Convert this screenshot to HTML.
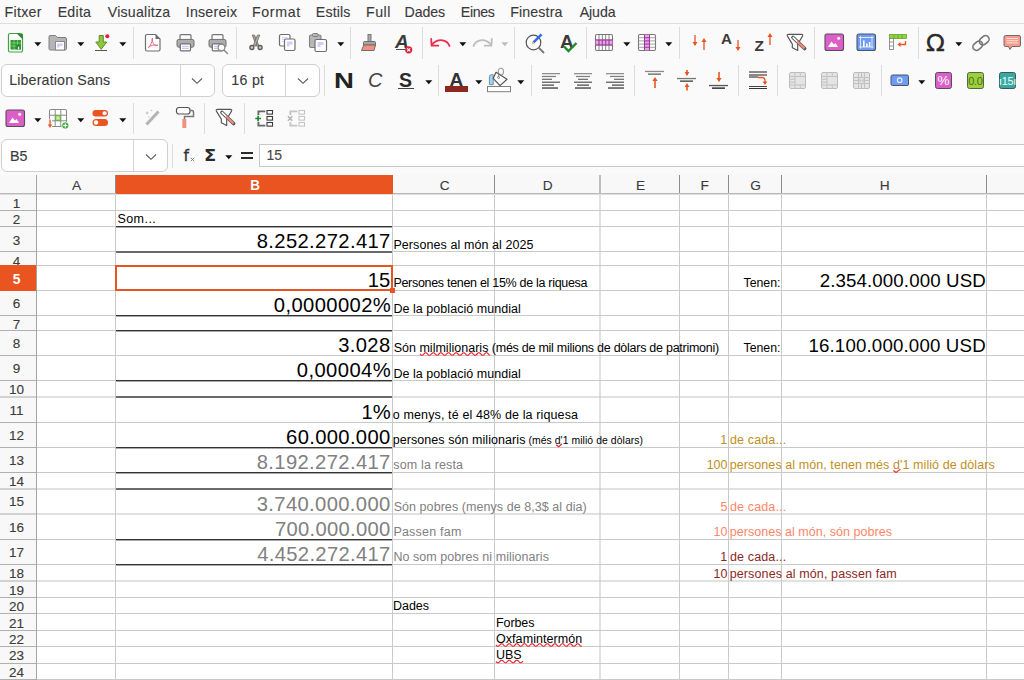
<!DOCTYPE html>
<html lang="ca"><head><meta charset="utf-8"><title>Full de càlcul</title>
<style>
html,body{margin:0;padding:0;}
body{width:1024px;height:680px;overflow:hidden;position:relative;background:#fafafa;font-family:"Liberation Sans",sans-serif;}
.t{position:absolute;white-space:nowrap;}
.u{position:absolute;white-space:nowrap;color:#3a3a3a;-webkit-text-stroke:0.12px #3a3a3a;}
#sheet{position:absolute;left:0;top:175px;width:1024px;height:505px;overflow:hidden;}
</style></head><body>
<div style="position:absolute;left:0px;top:23px;width:1024px;height:1px;background:#dedede;"></div>
<div class="u" style="top:2px;font-size:14.2px;line-height:20px;color:#3a3a3a;letter-spacing:0.304px;left:4.464px;">Fitxer</div>
<div class="u" style="top:2px;font-size:14.2px;line-height:20px;color:#3a3a3a;letter-spacing:0.240px;left:57.664px;">Edita</div>
<div class="u" style="top:2px;font-size:14.2px;line-height:20px;color:#3a3a3a;letter-spacing:0.231px;left:107.729px;">Visualitza</div>
<div class="u" style="top:2px;font-size:14.2px;line-height:20px;color:#3a3a3a;letter-spacing:0.231px;left:185.722px;">Insereix</div>
<div class="u" style="top:2px;font-size:14.2px;line-height:20px;color:#3a3a3a;letter-spacing:0.673px;left:251.964px;">Format</div>
<div class="u" style="top:2px;font-size:14.2px;line-height:20px;color:#3a3a3a;letter-spacing:0.139px;left:315.864px;">Estils</div>
<div class="u" style="top:2px;font-size:14.2px;line-height:20px;color:#3a3a3a;letter-spacing:0.499px;left:366.064px;">Full</div>
<div class="u" style="top:2px;font-size:14.2px;line-height:20px;color:#3a3a3a;letter-spacing:-0.101px;left:404.564px;">Dades</div>
<div class="u" style="top:2px;font-size:14.2px;line-height:20px;color:#3a3a3a;letter-spacing:-0.367px;left:460.864px;">Eines</div>
<div class="u" style="top:2px;font-size:14.2px;line-height:20px;color:#3a3a3a;letter-spacing:0.153px;left:510.164px;">Finestra</div>
<div class="u" style="top:2px;font-size:14.2px;line-height:20px;color:#3a3a3a;letter-spacing:-0.095px;left:579.7px;">Ajuda</div>
<svg style="position:absolute;left:7px;top:32px" width="18" height="22" viewBox="0 0 18 22"><path d="M3 1.5H12L15.5 5V18.5a1.5 1.5 0 0 1-1.5 1.5H3A1.5 1.5 0 0 1 1.5 18.5V3A1.5 1.5 0 0 1 3 1.5Z" fill="#fff" stroke="#43a047" stroke-width="1.2"/>
<path d="M9.5 1.2L16 7.7V3a1.8 1.8 0 0 0-1.8-1.8Z" fill="#2e8b2e"/>
<rect x="3.5" y="8" width="10.5" height="9.5" fill="#2f9a2f"/>
<path d="M3.5 11H14M3.5 14H14M7 8V17.5M10.5 8V17.5" stroke="#7fd07f" stroke-width="0.8"/>
<rect x="9.5" y="13" width="4" height="4.5" fill="#1f7a1f"/><rect x="10.8" y="14.5" width="1.5" height="3" fill="#e8ffe8"/></svg>
<svg style="position:absolute;left:34px;top:42px" width="8" height="5" viewBox="0 0 8 5"><path d="M0.3 0.3H7.3L3.8 4.3Z" fill="#111"/></svg>
<svg style="position:absolute;left:48px;top:34px" width="20" height="18" viewBox="0 0 20 18"><path d="M2 1.5H7.5L9.5 3.5H17A1.5 1.5 0 0 1 18.5 5V14.5A1.5 1.5 0 0 1 17 16H2.5A1.5 1.5 0 0 1 1 14.5V2.5A1 1 0 0 1 2 1.5Z" fill="#b5b5b5" stroke="#808080" stroke-width="1"/>
<rect x="7.5" y="7.5" width="9" height="8.5" fill="#fff" stroke="#8a8a8a" stroke-width="1"/>
<path d="M9 9.5H14.5V12H11.5V13.5H9Z" fill="#d0d0ff"/></svg>
<svg style="position:absolute;left:77px;top:42px" width="8" height="5" viewBox="0 0 8 5"><path d="M0.3 0.3H7.3L3.8 4.3Z" fill="#111"/></svg>
<svg style="position:absolute;left:93px;top:33px" width="18" height="20" viewBox="0 0 18 20"><path d="M6.2 2.5H10.3V9H13.7L8.2 16.3L2.8 9H6.2Z" fill="#8fc63f" stroke="#5e8f22" stroke-width="1" stroke-linejoin="round"/>
<rect x="2" y="17" width="12" height="1" fill="#555"/>
<circle cx="14.3" cy="3.2" r="2" fill="#e01b3c"/></svg>
<svg style="position:absolute;left:119px;top:42px" width="8" height="5" viewBox="0 0 8 5"><path d="M0.3 0.3H7.3L3.8 4.3Z" fill="#111"/></svg>
<div style="position:absolute;left:133px;top:27px;width:1px;height:32px;background:#dcdcdc;"></div>
<svg style="position:absolute;left:144px;top:33px" width="18" height="20" viewBox="0 0 18 20"><path d="M3 1.5H11.5L16 6V16.5A1.5 1.5 0 0 1 14.5 18H3A1.5 1.5 0 0 1 1.5 16.5V3A1.5 1.5 0 0 1 3 1.5Z" fill="#fff" stroke="#6e6e6e" stroke-width="1.2"/>
<path d="M11.5 1.5V6H16Z" fill="#6e6e6e"/>
<path d="M8.3 5.5C8.3 8 8.8 10 10 11.5C11.2 12.5 12.5 12.8 13.5 12.3M8.3 5.5C8.5 9 6.5 12.5 4.5 14.5M4.5 14.5C6.5 12.3 10 11.3 13.5 12.3" fill="none" stroke="#e5637a" stroke-width="0.95" stroke-linecap="round"/></svg>
<svg style="position:absolute;left:175.5px;top:33px" width="20" height="20" viewBox="0 0 20 20"><rect x="4" y="1.6" width="11" height="6" rx="1" fill="#fff" stroke="#767676" stroke-width="1.2"/>
<rect x="1" y="6.4" width="17" height="7.8" rx="1.8" fill="#adadad" stroke="#6e6e6e" stroke-width="1"/>
<rect x="4.3" y="10.8" width="10.2" height="7" rx="1" fill="#fff" stroke="#6e6e6e" stroke-width="1.2"/>
<path d="M6 13.3H12.8M6 15.3H12.8" stroke="#c8c8ff" stroke-width="1.2"/></svg>
<svg style="position:absolute;left:207.5px;top:33px" width="20" height="20" viewBox="0 0 20 20"><rect x="4" y="1.6" width="11" height="6" rx="1" fill="#fff" stroke="#767676" stroke-width="1.2"/>
<rect x="1" y="6.4" width="17" height="7.8" rx="1.8" fill="#adadad" stroke="#6e6e6e" stroke-width="1"/>
<rect x="4.3" y="10.8" width="10.2" height="7" rx="1" fill="#fff" stroke="#6e6e6e" stroke-width="1.2"/>
<path d="M6 13.3H12.8M6 15.3H12.8" stroke="#c8c8ff" stroke-width="1.2"/></svg>
<svg style="position:absolute;left:216px;top:42px" width="14" height="14" viewBox="0 0 14 14"><circle cx="5.5" cy="5.5" r="3.3" fill="#fff" stroke="#8a8a8a" stroke-width="1.2"/><path d="M8 8L11.5 11.5" stroke="#8a8a8a" stroke-width="1.5" stroke-linecap="round"/></svg>
<div style="position:absolute;left:236px;top:27px;width:1px;height:32px;background:#dcdcdc;"></div>
<svg style="position:absolute;left:247px;top:33px" width="18" height="20" viewBox="0 0 18 20"><path d="M5.2 2L7.6 2.2L11.6 12.2L9.6 13.2Z" fill="#a9a59b" stroke="#5c5a55" stroke-width="0.7" stroke-linejoin="round"/>
<path d="M12.8 2L10.4 2.2L6.4 12.2L8.4 13.2Z" fill="#b4b0a6" stroke="#5c5a55" stroke-width="0.7" stroke-linejoin="round"/>
<circle cx="4.9" cy="14.5" r="2" fill="#d0ccc2" stroke="#5c5a55" stroke-width="1.3"/><circle cx="13.1" cy="14.5" r="2" fill="#d0ccc2" stroke="#5c5a55" stroke-width="1.3"/></svg>
<svg style="position:absolute;left:278px;top:33px" width="20" height="20" viewBox="0 0 20 20"><rect x="1.5" y="1.5" width="10.5" height="11.5" rx="1.5" fill="#fff" stroke="#6e6e6e" stroke-width="1.2"/>
<path d="M4 4.5H9.5M4 6.5H9.5M4 8.5H7" stroke="#d4d4ff" stroke-width="1.2"/>
<rect x="6.5" y="6" width="10.5" height="11.5" rx="1.5" fill="#fff" stroke="#6e6e6e" stroke-width="1.2"/>
<path d="M9 8.5H14.5V11.5H11.5V13.5H9Z" fill="#d0d0ff"/></svg>
<svg style="position:absolute;left:308px;top:32px" width="22" height="22" viewBox="0 0 22 22"><rect x="1.5" y="3" width="11.5" height="12.5" rx="1.5" fill="#b8b8b8" stroke="#808080" stroke-width="1.1"/>
<rect x="4.5" y="1.5" width="5.5" height="3" rx="1" fill="#b8b8b8" stroke="#808080" stroke-width="1"/>
<rect x="7" y="7.5" width="11.5" height="12" rx="1.5" fill="#fff" stroke="#6e6e6e" stroke-width="1.2"/>
<path d="M9.5 10H15.5V13H12.5V15H9.5Z" fill="#d0d0ff"/></svg>
<svg style="position:absolute;left:337px;top:42px" width="8" height="5" viewBox="0 0 8 5"><path d="M0.3 0.3H7.3L3.8 4.3Z" fill="#111"/></svg>
<div style="position:absolute;left:350px;top:27px;width:1px;height:32px;background:#dcdcdc;"></div>
<svg style="position:absolute;left:360px;top:33px" width="18" height="20" viewBox="0 0 18 20"><rect x="8" y="1.5" width="3" height="7" fill="#aaa" stroke="#777" stroke-width="1"/>
<path d="M4.5 8.5H14.5Q15.5 8.5 15.5 9.5V12H3.5V9.5Q3.5 8.5 4.5 8.5Z" fill="#a6a6a6" stroke="#6e6e6e" stroke-width="1"/>
<path d="M3.8 12H15.5L14 17.5H1.5Z" fill="#f4907f" stroke="#6e6e6e" stroke-width="1"/></svg>
<div class="t" style="top:29px;font-size:19px;line-height:25px;color:#3a3a3a;font-weight:bold;left:395px;font-style:italic;">A</div>
<div style="position:absolute;left:396px;top:49px;width:12px;height:1px;background:#555;"></div>
<svg style="position:absolute;left:404px;top:45px" width="10" height="10" viewBox="0 0 10 10"><circle cx="4.7" cy="4.8" r="3.6" fill="#d9263c"/><path d="M3.2 3.3L6.2 6.3M6.2 3.3L3.2 6.3" stroke="#fff" stroke-width="1.1"/></svg>
<div style="position:absolute;left:422px;top:27px;width:1px;height:32px;background:#dcdcdc;"></div>
<svg style="position:absolute;left:428px;top:35px" width="24" height="14" viewBox="0 0 24 14"><path d="M21.5 11C19.5 5 11 2.5 4.5 9" fill="none" stroke="#ed2b4d" stroke-width="1.8" stroke-linecap="round"/><path d="M3.2 3.8L3.6 10.6L10.3 10.7" fill="none" stroke="#ed2b4d" stroke-width="1.8" stroke-linecap="round" stroke-linejoin="round"/></svg>
<svg style="position:absolute;left:459px;top:42px" width="8" height="5" viewBox="0 0 8 5"><path d="M0.3 0.3H7.3L3.8 4.3Z" fill="#111"/></svg>
<svg style="position:absolute;left:471px;top:35px" width="24" height="14" viewBox="0 0 24 14"><path d="M2.5 11C4.5 5 13 2.5 19.5 9" fill="none" stroke="#bdbdbd" stroke-width="1.8" stroke-linecap="round"/><path d="M20.8 3.8L20.4 10.6L13.7 10.7" fill="none" stroke="#bdbdbd" stroke-width="1.8" stroke-linecap="round" stroke-linejoin="round"/></svg>
<svg style="position:absolute;left:501px;top:42px" width="8" height="5" viewBox="0 0 8 5"><path d="M0.3 0.3H7.3L3.8 4.3Z" fill="#bdbdbd"/></svg>
<div style="position:absolute;left:514px;top:27px;width:1px;height:32px;background:#dcdcdc;"></div>
<svg style="position:absolute;left:524px;top:32px" width="24" height="22" viewBox="0 0 24 22"><circle cx="9.5" cy="10.5" r="7.3" fill="#fff" stroke="#555" stroke-width="1.2"/>
<path d="M15 16L19.5 20.5" stroke="#777" stroke-width="1.8" stroke-linecap="round"/>
<path d="M9.5 10.3L17.5 2.3" stroke="#2f6fed" stroke-width="2.6"/><path d="M7.6 12.4L8.5 9.3L10.6 11.4Z" fill="#f0b070"/></svg>
<div class="t" style="top:28.5px;font-size:19px;line-height:25px;color:#3a3a3a;font-weight:bold;left:560px;">A</div>
<svg style="position:absolute;left:562px;top:40px" width="18" height="14" viewBox="0 0 18 14"><path d="M2 6.5L6.5 11L14.5 3" fill="none" stroke="#1e8a2e" stroke-width="2.4"/></svg>
<div style="position:absolute;left:586px;top:27px;width:1px;height:32px;background:#dcdcdc;"></div>
<svg style="position:absolute;left:594px;top:33px" width="20" height="20" viewBox="0 0 20 20"><rect x="1.5" y="1.5" width="17" height="16" rx="1.5" fill="#fff" stroke="#777" stroke-width="1.1"/>
<path d="M5 1.5V17.5M8.3 1.5V17.5M11.7 1.5V17.5M15 1.5V17.5M1.5 7H18.5M1.5 12H18.5" stroke="#777" stroke-width="0.9"/>
<rect x="1.5" y="7" width="17" height="5" fill="#d68ad6" opacity=".75"/><path d="M1.5 7H18.5M1.5 12H18.5" stroke="#a033a0" stroke-width="1"/>
<path d="M5 7V12M8.3 7V12M11.7 7V12M15 7V12" stroke="#a033a0" stroke-width="0.9"/></svg>
<svg style="position:absolute;left:623px;top:42px" width="8" height="5" viewBox="0 0 8 5"><path d="M0.3 0.3H7.3L3.8 4.3Z" fill="#111"/></svg>
<svg style="position:absolute;left:637px;top:33px" width="20" height="20" viewBox="0 0 20 20"><rect x="1.5" y="1.5" width="17" height="16" rx="1.5" fill="#fff" stroke="#777" stroke-width="1.1"/>
<path d="M1.5 4.7H18.5M1.5 7.9H18.5M1.5 11.1H18.5M1.5 14.3H18.5M7.5 1.5V17.5M12.5 1.5V17.5" stroke="#999" stroke-width="0.9"/>
<rect x="7.5" y="1.5" width="5" height="16" fill="#d68ad6" opacity=".75"/><path d="M7.5 1.5V17.5M12.5 1.5V17.5" stroke="#a033a0" stroke-width="1"/>
<path d="M7.5 4.7H12.5M7.5 7.9H12.5M7.5 11.1H12.5M7.5 14.3H12.5" stroke="#a033a0" stroke-width="0.9"/></svg>
<svg style="position:absolute;left:665px;top:42px" width="8" height="5" viewBox="0 0 8 5"><path d="M0.3 0.3H7.3L3.8 4.3Z" fill="#111"/></svg>
<div style="position:absolute;left:679px;top:27px;width:1px;height:32px;background:#dcdcdc;"></div>
<svg style="position:absolute;left:690.5px;top:34px" width="8" height="13" viewBox="0 0 8 13"><path d="M4 1V11" stroke="#e95420" stroke-width="1.3"/><path d="M1.5 8H6.5L4 12Z" fill="#e95420"/></svg>
<svg style="position:absolute;left:699.5px;top:38px" width="8" height="13" viewBox="0 0 8 13"><path d="M4 2V12" stroke="#e95420" stroke-width="1.3"/><path d="M1.5 4H6.5L4 0Z" fill="#e95420"/></svg>
<div class="t" style="top:28.3px;font-size:15.2px;line-height:21px;color:#3a3a3a;font-weight:bold;left:721px;">A</div>
<svg style="position:absolute;left:733.5px;top:39px" width="8" height="13" viewBox="0 0 8 13"><path d="M4 1V11" stroke="#e95420" stroke-width="1.3"/><path d="M1.5 8H6.5L4 12Z" fill="#e95420"/></svg>
<div class="t" style="top:35.2px;font-size:15.5px;line-height:21px;color:#3a3a3a;font-weight:bold;left:754.5px;">Z</div>
<svg style="position:absolute;left:765.5px;top:33px" width="8" height="13" viewBox="0 0 8 13"><path d="M4 2V12" stroke="#e95420" stroke-width="1.3"/><path d="M1.5 4H6.5L4 0Z" fill="#e95420"/></svg>
<svg style="position:absolute;left:786px;top:33px" width="22" height="20" viewBox="0 0 22 20"><path d="M2.6 1.4H15.4Q17.4 1.4 16.5 3.1L11.7 11.3V17.4L6.35 14.8V11.1L1.4 3.1Q0.6 1.4 2.6 1.4Z" fill="#fff" stroke="#555" stroke-width="1.15" stroke-linejoin="round"/>
<path d="M7 4.5L18.6 15.5" stroke="#5a5a5a" stroke-width="3.7" stroke-linecap="round"/><path d="M7.2 4.7L11.2 8.5" stroke="#fff" stroke-width="1.6" stroke-linecap="round"/><path d="M11.2 8.5L18.5 15.4" stroke="#f08a7a" stroke-width="2.2" stroke-linecap="butt"/></svg>
<div style="position:absolute;left:814px;top:27px;width:1px;height:32px;background:#dcdcdc;"></div>
<svg style="position:absolute;left:824px;top:33px" width="21" height="20" viewBox="0 0 21 20"><rect x="1" y="1" width="18.5" height="16.5" rx="2" fill="#dc5fc8" stroke="#5a4a5a" stroke-width="1.1"/>
<path d="M4 14L7.5 8.5L10 11.5L11.5 10L14 14Z" fill="#fff"/><circle cx="14.7" cy="5.2" r="1.5" fill="#fff"/></svg>
<svg style="position:absolute;left:856px;top:33px" width="21" height="20" viewBox="0 0 21 20"><rect x="1" y="1" width="18.5" height="16.5" rx="2" fill="#6f9bf2" stroke="#4a5568" stroke-width="1.1"/>
<path d="M4.5 3V15.5M16 3V15.5M3 4.5H17.5M3 14H17.5" stroke="#e8f0ff" stroke-width="0.9"/>
<rect x="7" y="7.5" width="1.6" height="6.5" fill="#fff"/><rect x="10" y="10.5" width="1.6" height="3.5" fill="#fff"/><rect x="12.8" y="9" width="1.6" height="5" fill="#fff"/></svg>
<svg style="position:absolute;left:888px;top:33px" width="20" height="20" viewBox="0 0 20 20"><rect x="1.5" y="1.5" width="17" height="4" fill="#8ed43a" stroke="#6aa22a" stroke-width="0.8"/><path d="M6 1.5V5.5M10 1.5V5.5M14 1.5V5.5" stroke="#6aa22a" stroke-width="0.8"/>
<rect x="1.5" y="5.5" width="4" height="11" fill="#fff" stroke="#888" stroke-width="0.9"/><path d="M1.5 9H5.5M1.5 13H5.5" stroke="#888" stroke-width="0.9"/>
<path d="M17.5 8V11.5H10.5" fill="none" stroke="#e95420" stroke-width="1.3"/><path d="M12.5 9L9.5 11.5L12.5 14Z" fill="#e95420"/></svg>
<div style="position:absolute;left:918px;top:27px;width:1px;height:32px;background:#dcdcdc;"></div>
<div class="t" style="top:28px;font-size:23px;line-height:30px;color:#2a2a2a;font-family:'DejaVu Sans','Liberation Sans',sans-serif;left:926.3px;-webkit-text-stroke:0.3px #2a2a2a;transform:scaleX(1.07);transform-origin:0 0;">Ω</div>
<svg style="position:absolute;left:955px;top:42px" width="8" height="5" viewBox="0 0 8 5"><path d="M0.3 0.3H7.3L3.8 4.3Z" fill="#111"/></svg>
<svg style="position:absolute;left:970px;top:32px" width="22" height="22" viewBox="0 0 22 22"><g transform="rotate(-40 11 11)" fill="none" stroke="#777" stroke-width="1.6"><rect x="1.5" y="7.5" width="10.5" height="7" rx="3.5"/><rect x="10" y="7.5" width="10.5" height="7" rx="3.5"/></g></svg>
<svg style="position:absolute;left:1003px;top:34px" width="20" height="18" viewBox="0 0 20 18"><path d="M2.5 1.5H16Q17.5 1.5 17.5 3V11Q17.5 12.5 16 12.5H9L7 15.5L5.5 12.5H2.5Q1 12.5 1 11V3Q1 1.5 2.5 1.5Z" fill="#f7998b" stroke="#6e6e6e" stroke-width="1"/>
<path d="M3.5 4.5H15M3.5 6.7H15M3.5 8.9H15" stroke="#fde0dc" stroke-width="1"/></svg>
<div style="position:absolute;left:1px;top:64px;width:212px;height:31px;background:#fff;border:1px solid #cfcfcf;border-radius:6px;"></div>
<div style="position:absolute;left:180px;top:65px;width:1px;height:31px;background:#d4d4d4;"></div>
<svg style="position:absolute;left:191px;top:76.5px" width="12" height="8" viewBox="0 0 12 8"><path d="M1 1.5L6 6.3L11 1.5" fill="none" stroke="#5a5a5a" stroke-width="1.1"/></svg>
<div class="u" style="top:70px;font-size:14.2px;line-height:20px;color:#3a3a3a;letter-spacing:0.175px;left:9.164px;">Liberation Sans</div>
<div style="position:absolute;left:222px;top:64px;width:96px;height:31px;background:#fff;border:1px solid #cfcfcf;border-radius:6px;"></div>
<div style="position:absolute;left:285px;top:65px;width:1px;height:31px;background:#d4d4d4;"></div>
<svg style="position:absolute;left:297px;top:76.5px" width="12" height="8" viewBox="0 0 12 8"><path d="M1 1.5L6 6.3L11 1.5" fill="none" stroke="#5a5a5a" stroke-width="1.1"/></svg>
<div class="u" style="top:70px;font-size:14.2px;line-height:20px;color:#3a3a3a;letter-spacing:0.278px;left:231.335px;">16 pt</div>
<div style="position:absolute;left:324px;top:65px;width:1px;height:31px;background:#dcdcdc;"></div>
<div class="t" style="top:66px;font-size:22.6px;line-height:29px;color:#222;font-weight:bold;left:334.4px;transform:scaleX(1.22);transform-origin:0 0;">N</div>
<div class="t" style="top:67px;font-size:20px;line-height:26px;color:#444;left:368px;font-style:italic;">C</div>
<div class="t" style="top:66.5px;font-size:19.5px;line-height:26px;color:#2a2a2a;font-weight:bold;left:399px;">S</div>
<div style="position:absolute;left:398px;top:88px;width:16px;height:1px;background:#444;"></div>
<svg style="position:absolute;left:425px;top:80px" width="8" height="5" viewBox="0 0 8 5"><path d="M0.3 0.3H7.3L3.8 4.3Z" fill="#111"/></svg>
<div style="position:absolute;left:438px;top:65px;width:1px;height:31px;background:#dcdcdc;"></div>
<div class="t" style="top:67px;font-size:19px;line-height:25px;color:#333;font-weight:bold;left:449.5px;">A</div>
<div style="position:absolute;left:445px;top:86px;width:23px;height:6px;background:#8d281e;"></div>
<svg style="position:absolute;left:475px;top:80px" width="8" height="5" viewBox="0 0 8 5"><path d="M0.3 0.3H7.3L3.8 4.3Z" fill="#111"/></svg>
<svg style="position:absolute;left:486px;top:66px" width="27" height="28" viewBox="0 0 27 28"><rect x="1.5" y="20.5" width="23" height="5.2" fill="#fff" stroke="#808080" stroke-width="1"/>
<path d="M3.4 18.6V10.8Q3.4 8.7 5.5 8.7H7.2V18.6Z" fill="#9fd7f0" stroke="#6a8796" stroke-width="0.9"/>
<ellipse cx="14.9" cy="5.6" rx="2.6" ry="3.4" fill="none" stroke="#9a9a9a" stroke-width="1.1"/>
<path d="M10 6.3L21 13.3L14 19.6L7.2 12.4Z" fill="#fff" stroke="#555" stroke-width="1.2" stroke-linejoin="round"/>
<path d="M12.6 11V7.2" stroke="#8a8a8a" stroke-width="0.9"/><circle cx="12.6" cy="11.5" r="1" fill="#fff" stroke="#666" stroke-width="0.8"/></svg>
<svg style="position:absolute;left:517px;top:80px" width="8" height="5" viewBox="0 0 8 5"><path d="M0.3 0.3H7.3L3.8 4.3Z" fill="#111"/></svg>
<div style="position:absolute;left:531px;top:65px;width:1px;height:31px;background:#dcdcdc;"></div>
<svg style="position:absolute;left:542px;top:71.5px" width="18" height="18" viewBox="0 0 18 18"><rect x="0" y="1.0" width="18" height="1.25" fill="#8e8e8e"/><rect x="0" y="3.85" width="14" height="1.25" fill="#808080"/><rect x="0" y="6.7" width="10" height="1.25" fill="#6e6e6e"/><rect x="0" y="9.6" width="18" height="1.25" fill="#5a5a5a"/><rect x="0" y="12.5" width="12" height="1.25" fill="#484848"/><rect x="0" y="15.4" width="16" height="1.25" fill="#333"/></svg>
<svg style="position:absolute;left:574px;top:71.5px" width="18" height="18" viewBox="0 0 18 18"><rect x="0.0" y="1.0" width="18" height="1.25" fill="#8e8e8e"/><rect x="2.0" y="3.85" width="14" height="1.25" fill="#808080"/><rect x="4.0" y="6.7" width="10" height="1.25" fill="#6e6e6e"/><rect x="0.0" y="9.6" width="18" height="1.25" fill="#5a5a5a"/><rect x="3.0" y="12.5" width="12" height="1.25" fill="#484848"/><rect x="1.0" y="15.4" width="16" height="1.25" fill="#333"/></svg>
<svg style="position:absolute;left:606px;top:71.5px" width="18" height="18" viewBox="0 0 18 18"><rect x="0" y="1.0" width="18" height="1.25" fill="#8e8e8e"/><rect x="4" y="3.85" width="14" height="1.25" fill="#808080"/><rect x="8" y="6.7" width="10" height="1.25" fill="#6e6e6e"/><rect x="0" y="9.6" width="18" height="1.25" fill="#5a5a5a"/><rect x="6" y="12.5" width="12" height="1.25" fill="#484848"/><rect x="2" y="15.4" width="16" height="1.25" fill="#333"/></svg>
<div style="position:absolute;left:634px;top:65px;width:1px;height:31px;background:#dcdcdc;"></div>
<svg style="position:absolute;left:645px;top:70px" width="20" height="6" viewBox="0 0 20 6"><rect x="0" y="0.8" width="19" height="1.3" fill="#8a8a8a"/><rect x="3" y="3.4" width="13" height="1.5" fill="#777"/></svg>
<svg style="position:absolute;left:650.5px;top:77px" width="8" height="12" viewBox="0 0 8 12"><path d="M4 2V11" stroke="#e95420" stroke-width="1.6"/><path d="M1.4 4H6.6L4 0Z" fill="#e95420"/></svg>
<svg style="position:absolute;left:677px;top:77px" width="20" height="6" viewBox="0 0 20 6"><rect x="0" y="0.9" width="19" height="1.3" fill="#777"/><rect x="3" y="3.4" width="13" height="1.5" fill="#555"/></svg>
<svg style="position:absolute;left:682.5px;top:69px" width="8" height="8" viewBox="0 0 8 8"><path d="M4 1V6" stroke="#e95420" stroke-width="1.6"/><path d="M1.7000000000000002 3H6.3L4 7Z" fill="#e95420"/></svg>
<svg style="position:absolute;left:682.5px;top:82.5px" width="8" height="8.5" viewBox="0 0 8 8.5"><path d="M4 2V7.5" stroke="#e95420" stroke-width="1.6"/><path d="M1.7000000000000002 4H6.3L4 0Z" fill="#e95420"/></svg>
<svg style="position:absolute;left:714.5px;top:71px" width="8" height="12" viewBox="0 0 8 12"><path d="M4 1V10" stroke="#e95420" stroke-width="1.6"/><path d="M1.4 7H6.6L4 11Z" fill="#e95420"/></svg>
<svg style="position:absolute;left:709px;top:84px" width="20" height="6" viewBox="0 0 20 6"><rect x="0" y="0.9" width="19" height="1.3" fill="#555"/><rect x="3" y="3.4" width="13" height="1.5" fill="#333"/></svg>
<div style="position:absolute;left:738px;top:65px;width:1px;height:31px;background:#dcdcdc;"></div>
<div style="position:absolute;left:749px;top:71px;width:18px;height:2px;background:#8a8a8a;"></div>
<div style="position:absolute;left:749px;top:73.7px;width:18px;height:2px;background:#8a8a8a;"></div>
<div style="position:absolute;left:749px;top:76.4px;width:9px;height:2px;background:#8a8a8a;"></div>
<svg style="position:absolute;left:757px;top:76px" width="12" height="10" viewBox="0 0 12 10"><path d="M1 1.5H5Q8 1.5 8 5V6" fill="none" stroke="#e95420" stroke-width="1.3"/><path d="M5.6 5.5H10.4L8 9Z" fill="#e95420"/></svg>
<div style="position:absolute;left:749px;top:85.5px;width:18px;height:1px;background:#444;"></div>
<div style="position:absolute;left:749px;top:88px;width:18px;height:1px;background:#333;"></div>
<div style="position:absolute;left:777px;top:65px;width:1px;height:31px;background:#dcdcdc;"></div>
<svg style="position:absolute;left:789px;top:71.5px" width="17" height="17" viewBox="0 0 17 17"><rect x="0.5" y="0.5" width="16" height="16" rx="1.5" fill="#e4e4e4" stroke="#bcbcbc" stroke-width="1"/><path d="M0.5 4.5H16.5M0.5 13H16.5M6 0.5V16.5M11.3 0.5V4.5M11.3 13V16.5M0.5 7.3H6M0.5 10.2H6" stroke="#c2c2c2" stroke-width="1" fill="none"/></svg>
<svg style="position:absolute;left:821px;top:71.5px" width="17" height="17" viewBox="0 0 17 17"><rect x="0.5" y="0.5" width="16" height="16" rx="1.5" fill="#e4e4e4" stroke="#bcbcbc" stroke-width="1"/><path d="M0.5 4.5H16.5M0.5 13H16.5M6 0.5V16.5M11.3 0.5V4.5M11.3 13V16.5M0.5 7.3H6M0.5 10.2H6" stroke="#c2c2c2" stroke-width="1" fill="none"/></svg>
<svg style="position:absolute;left:853px;top:71.5px" width="17" height="17" viewBox="0 0 17 17"><rect x="0.5" y="0.5" width="16" height="16" rx="1.5" fill="#e4e4e4" stroke="#bcbcbc" stroke-width="1"/><path d="M0.5 5.5H16.5M0.5 11.5H16.5M5.5 0.5V16.5M11.5 0.5V16.5M8.5 0.5V5.5M8.5 11.5V16.5M0.5 8.5H5.5M11.5 8.5H16.5" stroke="#c2c2c2" stroke-width="1" fill="none"/><path d="M6.3 6.3L8.5 8.5L6.3 10.7ZM10.7 6.3L8.5 8.5L10.7 10.7Z" fill="#c6c6c6"/></svg>
<div style="position:absolute;left:881px;top:65px;width:1px;height:31px;background:#dcdcdc;"></div>
<svg style="position:absolute;left:890px;top:74px" width="20" height="13" viewBox="0 0 20 13"><rect x="1" y="1" width="17.5" height="10.5" rx="1.5" fill="#6f9bf2" stroke="#4a5568" stroke-width="1"/><circle cx="9.7" cy="6.2" r="2.3" fill="none" stroke="#e8f0ff" stroke-width="1.1"/></svg>
<svg style="position:absolute;left:918px;top:80px" width="8" height="5" viewBox="0 0 8 5"><path d="M0.3 0.3H7.3L3.8 4.3Z" fill="#111"/></svg>
<div style="position:absolute;left:935px;top:72px;width:15px;height:15px;background:#dc5fc8;border:1px solid #5a4a5a;border-radius:2.5px;"></div>
<div class="t" style="top:70.5px;font-size:13.5px;line-height:19px;color:#fff;left:843.5px;width:200px;text-align:center;">%</div>
<div style="position:absolute;left:967px;top:72px;width:15px;height:15px;background:#9bd13f;border:1px solid #55663a;border-radius:2.5px;"></div>
<div class="t" style="top:72.5px;font-size:11px;line-height:16px;color:#4f6a1e;letter-spacing:-0.300px;left:875.5px;width:200px;text-align:center;">0.0</div>
<div style="position:absolute;left:999px;top:72px;width:15px;height:15px;background:#3aa8a0;border:1px solid #3a5a58;border-radius:2.5px;"></div>
<div class="t" style="top:72.5px;font-size:11px;line-height:16px;color:#e8ffff;letter-spacing:-0.300px;left:907.5px;width:200px;text-align:center;">ı15ı</div>
<svg style="position:absolute;left:5px;top:109px" width="21" height="20" viewBox="0 0 21 20"><rect x="1" y="1" width="18.5" height="16.5" rx="2" fill="#dc5fc8" stroke="#5a4a5a" stroke-width="1.1"/>
<path d="M4 14L7.5 8.5L10 11.5L11.5 10L14 14Z" fill="#fff"/><circle cx="14.7" cy="5.2" r="1.5" fill="#fff"/></svg>
<svg style="position:absolute;left:34px;top:118px" width="8" height="5" viewBox="0 0 8 5"><path d="M0.3 0.3H7.3L3.8 4.3Z" fill="#111"/></svg>
<svg style="position:absolute;left:47px;top:108px" width="24" height="22" viewBox="0 0 24 22"><rect x="2.5" y="1.5" width="17" height="17" rx="1.5" fill="#fff" stroke="#8a8a8a" stroke-width="1.1"/>
<path d="M8.2 1.5V18.5M13.8 1.5V18.5M2.5 7.2H19.5M2.5 12.8H19.5" stroke="#8a8a8a" stroke-width="1"/>
<rect x="8.7" y="7.7" width="4.6" height="4.6" fill="#c8eab0" stroke="#5cb030" stroke-width="1"/>
<rect x="1" y="11" width="4" height="9" fill="#fafafa"/><path d="M3 11.5V17" stroke="#e95420" stroke-width="1.3"/><path d="M0.8 16.5H5.2L3 20Z" fill="#e95420"/>
<circle cx="18.3" cy="17.5" r="3.6" fill="#3fae3a" stroke="#fafafa" stroke-width="0.8"/><path d="M16.2 17.5H20.4M18.3 15.4V19.6" stroke="#fff" stroke-width="1.2"/></svg>
<svg style="position:absolute;left:77px;top:118px" width="8" height="5" viewBox="0 0 8 5"><path d="M0.3 0.3H7.3L3.8 4.3Z" fill="#111"/></svg>
<svg style="position:absolute;left:92px;top:109px" width="18" height="18" viewBox="0 0 18 18"><rect x="0.5" y="1" width="15.5" height="6.5" rx="3.25" fill="#e95420"/><circle cx="12.6" cy="4.25" r="2.1" fill="#fff"/>
<rect x="0.5" y="10" width="15.5" height="7" rx="3.5" fill="#e95420"/><circle cx="4" cy="13.5" r="2.2" fill="#fff"/></svg>
<svg style="position:absolute;left:119px;top:118px" width="8" height="5" viewBox="0 0 8 5"><path d="M0.3 0.3H7.3L3.8 4.3Z" fill="#111"/></svg>
<div style="position:absolute;left:133px;top:103px;width:1px;height:31px;background:#dcdcdc;"></div>
<svg style="position:absolute;left:143px;top:108px" width="20" height="20" viewBox="0 0 20 20"><path d="M3.5 16.5L15.5 3.5" stroke="#b4b4b4" stroke-width="3"/><path d="M4 3L4.8 4.6L6.4 5L4.8 5.6L4 7L3.4 5.6L1.8 5L3.4 4.6Z" fill="#c4c4c4"/><circle cx="8.5" cy="2.5" r="0.8" fill="#c4c4c4"/><circle cx="6" cy="9" r="0.7" fill="#c4c4c4"/></svg>
<svg style="position:absolute;left:175px;top:106px" width="22" height="24" viewBox="0 0 22 24"><rect x="1.5" y="1.5" width="13.5" height="6.5" rx="2.5" fill="#fff" stroke="#555" stroke-width="1.2"/>
<path d="M15 4.5H17Q18.5 4.5 18.5 6V10.5H9.5V13" fill="none" stroke="#777" stroke-width="1.5"/>
<rect x="7.3" y="13" width="4" height="9" fill="#f4907f"/></svg>
<div style="position:absolute;left:204px;top:103px;width:1px;height:31px;background:#dcdcdc;"></div>
<svg style="position:absolute;left:215px;top:108px" width="22" height="20" viewBox="0 0 22 20"><path d="M2.6 1.4H15.4Q17.4 1.4 16.5 3.1L11.7 11.3V17.4L6.35 14.8V11.1L1.4 3.1Q0.6 1.4 2.6 1.4Z" fill="#fff" stroke="#555" stroke-width="1.15" stroke-linejoin="round"/>
<path d="M7 4.5L18.6 15.5" stroke="#5a5a5a" stroke-width="3.7" stroke-linecap="round"/><path d="M7.2 4.7L11.2 8.5" stroke="#fff" stroke-width="1.6" stroke-linecap="round"/><path d="M11.2 8.5L18.5 15.4" stroke="#f08a7a" stroke-width="2.2" stroke-linecap="butt"/></svg>
<div style="position:absolute;left:244px;top:103px;width:1px;height:31px;background:#dcdcdc;"></div>
<svg style="position:absolute;left:255px;top:110px" width="19" height="18" viewBox="0 0 19 18"><path d="M10.3 1.4H3.4V15.6H10.3" fill="none" stroke="#666" stroke-width="1.9"/><rect x="12" y="0.5" width="5.5" height="3.6" fill="#fff" stroke="#3a3a3a" stroke-width="1.1"/><rect x="12" y="6.5" width="5.5" height="3.6" fill="#fff" stroke="#3a3a3a" stroke-width="1.1"/><rect x="12" y="12.5" width="5.5" height="3.6" fill="#fff" stroke="#3a3a3a" stroke-width="1.1"/><rect x="0" y="5" width="7" height="7" fill="#fafafa"/><path d="M0.3 8.5H6M3.1 5.7V11.3" stroke="#1e8a2e" stroke-width="1.7"/></svg>
<svg style="position:absolute;left:287px;top:110px" width="19" height="18" viewBox="0 0 19 18"><path d="M10.3 1.4H3.4V15.6H10.3" fill="none" stroke="#c4c4c4" stroke-width="1.9"/><rect x="12" y="0.5" width="5.5" height="3.6" fill="#fff" stroke="#c4c4c4" stroke-width="1.1"/><rect x="12" y="6.5" width="5.5" height="3.6" fill="#fff" stroke="#c4c4c4" stroke-width="1.1"/><rect x="12" y="12.5" width="5.5" height="3.6" fill="#fff" stroke="#c4c4c4" stroke-width="1.1"/><rect x="0" y="5" width="6.5" height="7" fill="#fafafa"/><path d="M0.9 6.2L5.3 10.8M5.3 6.2L0.9 10.8" stroke="#b4b4b4" stroke-width="1.5"/></svg>
<div style="position:absolute;left:1px;top:139px;width:165px;height:31px;background:#fff;border:1px solid #cfcfcf;border-radius:6px;"></div>
<div style="position:absolute;left:133px;top:140px;width:1px;height:31px;background:#d4d4d4;"></div>
<svg style="position:absolute;left:145px;top:152.5px" width="12" height="8" viewBox="0 0 12 8"><path d="M1 1.5L6 6.3L11 1.5" fill="none" stroke="#5a5a5a" stroke-width="1.1"/></svg>
<div class="u" style="top:145.5px;font-size:14.3px;line-height:20px;color:#3a3a3a;left:10px;">B5</div>
<div style="position:absolute;left:172px;top:144px;width:1px;height:24px;background:#dcdcdc;"></div>
<div class="t" style="top:145px;font-size:15.5px;line-height:22px;color:#333;font-family:'DejaVu Sans','Liberation Sans',sans-serif;left:183.5px;-webkit-text-stroke:0.3px #333;">f</div>
<svg style="position:absolute;left:190px;top:157px" width="6" height="5" viewBox="0 0 6 5"><path d="M0.8 0.8L4.2 4.2M4.2 0.8L0.8 4.2" stroke="#777" stroke-width="0.9"/></svg>
<div class="t" style="top:145px;font-size:15.3px;line-height:22px;color:#2a2a2a;font-weight:bold;font-family:'DejaVu Sans','Liberation Sans',sans-serif;left:204.3px;transform:scaleX(1.17);transform-origin:0 0;">Σ</div>
<svg style="position:absolute;left:225px;top:155px" width="8" height="5" viewBox="0 0 8 5"><path d="M0.3 0.3H7.3L3.8 4.3Z" fill="#111"/></svg>
<div style="position:absolute;left:241px;top:151.5px;width:12px;height:2px;background:#2a2a2a;"></div>
<div style="position:absolute;left:241px;top:156.5px;width:12px;height:2px;background:#2a2a2a;"></div>
<div style="position:absolute;left:259px;top:144px;width:780px;height:21px;background:#fff;border:1px solid #c8c8c8;"></div>
<div class="u" style="top:145px;font-size:14px;line-height:20px;color:#4a4a4a;left:266.5px;">15</div>
<div style="position:absolute;left:37px;top:194px;width:987px;height:486px;background:#fff;"></div>
<div style="position:absolute;left:0px;top:175px;width:1024px;height:18px;background:#f8f8f8;"></div>
<div style="position:absolute;left:0px;top:194px;width:36px;height:486px;background:#f8f8f8;"></div>
<div style="position:absolute;left:37px;top:210px;width:987px;height:1px;background:#c9c9c9;"></div>
<div style="position:absolute;left:37px;top:226px;width:987px;height:1px;background:#c9c9c9;"></div>
<div style="position:absolute;left:37px;top:251px;width:987px;height:1px;background:#c9c9c9;"></div>
<div style="position:absolute;left:37px;top:265px;width:987px;height:1px;background:#c9c9c9;"></div>
<div style="position:absolute;left:37px;top:290px;width:987px;height:1px;background:#c9c9c9;"></div>
<div style="position:absolute;left:37px;top:315px;width:987px;height:1px;background:#c9c9c9;"></div>
<div style="position:absolute;left:37px;top:330px;width:987px;height:1px;background:#c9c9c9;"></div>
<div style="position:absolute;left:37px;top:355px;width:987px;height:1px;background:#c9c9c9;"></div>
<div style="position:absolute;left:37px;top:380px;width:987px;height:1px;background:#c9c9c9;"></div>
<div style="position:absolute;left:37px;top:396px;width:987px;height:2px;background:#c9c9c9;opacity:.55"></div>
<div style="position:absolute;left:37px;top:422px;width:987px;height:1px;background:#c9c9c9;"></div>
<div style="position:absolute;left:37px;top:447px;width:987px;height:1px;background:#c9c9c9;"></div>
<div style="position:absolute;left:37px;top:472px;width:987px;height:1px;background:#c9c9c9;"></div>
<div style="position:absolute;left:37px;top:488px;width:987px;height:2px;background:#c9c9c9;opacity:.55"></div>
<div style="position:absolute;left:37px;top:513px;width:987px;height:2px;background:#c9c9c9;opacity:.55"></div>
<div style="position:absolute;left:37px;top:539px;width:987px;height:1px;background:#c9c9c9;"></div>
<div style="position:absolute;left:37px;top:564px;width:987px;height:1px;background:#c9c9c9;"></div>
<div style="position:absolute;left:37px;top:580px;width:987px;height:2px;background:#c9c9c9;opacity:.55"></div>
<div style="position:absolute;left:37px;top:597px;width:987px;height:1px;background:#c9c9c9;"></div>
<div style="position:absolute;left:37px;top:613px;width:987px;height:1px;background:#c9c9c9;"></div>
<div style="position:absolute;left:37px;top:630px;width:987px;height:1px;background:#c9c9c9;"></div>
<div style="position:absolute;left:37px;top:646px;width:987px;height:1px;background:#c9c9c9;"></div>
<div style="position:absolute;left:37px;top:663px;width:987px;height:1px;background:#c9c9c9;"></div>
<div style="position:absolute;left:37px;top:679px;width:987px;height:1px;background:#c9c9c9;"></div>
<div style="position:absolute;left:115px;top:194px;width:1px;height:486px;background:#c9c9c9;"></div>
<div style="position:absolute;left:392px;top:194px;width:1px;height:486px;background:#c9c9c9;"></div>
<div style="position:absolute;left:494px;top:194px;width:1px;height:486px;background:#c9c9c9;"></div>
<div style="position:absolute;left:599px;top:194px;width:2px;height:486px;background:#c9c9c9;opacity:.55"></div>
<div style="position:absolute;left:679px;top:194px;width:1px;height:486px;background:#c9c9c9;"></div>
<div style="position:absolute;left:728px;top:194px;width:1px;height:486px;background:#c9c9c9;"></div>
<div style="position:absolute;left:781px;top:194px;width:1px;height:486px;background:#c9c9c9;"></div>
<div style="position:absolute;left:986px;top:194px;width:1px;height:486px;background:#c9c9c9;"></div>
<div style="position:absolute;left:0px;top:193px;width:1024px;height:1px;background:#bababa;"></div>
<div style="position:absolute;left:0px;top:194px;width:1024px;height:1px;background:#dedede;"></div>
<div style="position:absolute;left:36px;top:175px;width:1px;height:505px;background:#a4a4a4;"></div>
<div style="position:absolute;left:494px;top:175px;width:1px;height:18px;background:#8c8c8c;"></div>
<div style="position:absolute;left:599px;top:175px;width:2px;height:18px;background:#8c8c8c;opacity:.55"></div>
<div style="position:absolute;left:679px;top:175px;width:1px;height:18px;background:#8c8c8c;"></div>
<div style="position:absolute;left:728px;top:175px;width:1px;height:18px;background:#8c8c8c;"></div>
<div style="position:absolute;left:781px;top:175px;width:1px;height:18px;background:#8c8c8c;"></div>
<div style="position:absolute;left:986px;top:175px;width:1px;height:18px;background:#8c8c8c;"></div>
<div style="position:absolute;left:115px;top:175px;width:1px;height:18px;background:#8c8c8c;"></div>
<div style="position:absolute;left:0px;top:210px;width:36px;height:1px;background:#b0b0b0;"></div>
<div style="position:absolute;left:0px;top:226px;width:36px;height:1px;background:#b0b0b0;"></div>
<div style="position:absolute;left:0px;top:251px;width:36px;height:1px;background:#b0b0b0;"></div>
<div style="position:absolute;left:0px;top:315px;width:36px;height:1px;background:#b0b0b0;"></div>
<div style="position:absolute;left:0px;top:330px;width:36px;height:1px;background:#b0b0b0;"></div>
<div style="position:absolute;left:0px;top:355px;width:36px;height:1px;background:#b0b0b0;"></div>
<div style="position:absolute;left:0px;top:380px;width:36px;height:1px;background:#b0b0b0;"></div>
<div style="position:absolute;left:0px;top:396px;width:36px;height:2px;background:#b0b0b0;opacity:.55"></div>
<div style="position:absolute;left:0px;top:422px;width:36px;height:1px;background:#b0b0b0;"></div>
<div style="position:absolute;left:0px;top:447px;width:36px;height:1px;background:#b0b0b0;"></div>
<div style="position:absolute;left:0px;top:472px;width:36px;height:1px;background:#b0b0b0;"></div>
<div style="position:absolute;left:0px;top:488px;width:36px;height:2px;background:#b0b0b0;opacity:.55"></div>
<div style="position:absolute;left:0px;top:513px;width:36px;height:2px;background:#b0b0b0;opacity:.55"></div>
<div style="position:absolute;left:0px;top:539px;width:36px;height:1px;background:#b0b0b0;"></div>
<div style="position:absolute;left:0px;top:564px;width:36px;height:1px;background:#b0b0b0;"></div>
<div style="position:absolute;left:0px;top:580px;width:36px;height:2px;background:#b0b0b0;opacity:.55"></div>
<div style="position:absolute;left:0px;top:597px;width:36px;height:1px;background:#b0b0b0;"></div>
<div style="position:absolute;left:0px;top:613px;width:36px;height:1px;background:#b0b0b0;"></div>
<div style="position:absolute;left:0px;top:630px;width:36px;height:1px;background:#b0b0b0;"></div>
<div style="position:absolute;left:0px;top:646px;width:36px;height:1px;background:#b0b0b0;"></div>
<div style="position:absolute;left:0px;top:663px;width:36px;height:1px;background:#b0b0b0;"></div>
<div style="position:absolute;left:0px;top:679px;width:36px;height:1px;background:#b0b0b0;"></div>
<div style="position:absolute;left:116px;top:175px;width:277px;height:19px;background:#e95420;"></div>
<div class="u" style="top:176px;font-size:13.7px;line-height:19px;color:#3b3b3b;left:-23.4px;width:200px;text-align:center;">A</div>
<div class="t" style="top:175px;font-size:14.6px;line-height:20px;color:#fff;font-weight:bold;left:154.6px;width:200px;text-align:center;transform:scaleX(0.92);">B</div>
<div class="u" style="top:176px;font-size:13.7px;line-height:19px;color:#3b3b3b;left:344.6px;width:200px;text-align:center;">C</div>
<div class="u" style="top:176px;font-size:13.7px;line-height:19px;color:#3b3b3b;left:447.6px;width:200px;text-align:center;">D</div>
<div class="u" style="top:176px;font-size:13.7px;line-height:19px;color:#3b3b3b;left:540.6px;width:200px;text-align:center;">E</div>
<div class="u" style="top:176px;font-size:13.7px;line-height:19px;color:#3b3b3b;left:604.6px;width:200px;text-align:center;">F</div>
<div class="u" style="top:176px;font-size:13.7px;line-height:19px;color:#3b3b3b;left:655.6px;width:200px;text-align:center;">G</div>
<div class="u" style="top:176px;font-size:13.7px;line-height:19px;color:#3b3b3b;left:784.6px;width:200px;text-align:center;">H</div>
<div class="u" style="top:194px;font-size:13.5px;line-height:19px;color:#3b3b3b;left:-83.5px;width:200px;text-align:center;">1</div>
<div class="u" style="top:210px;font-size:13.5px;line-height:19px;color:#3b3b3b;left:-83.5px;width:200px;text-align:center;">2</div>
<div class="u" style="top:231px;font-size:13.5px;line-height:19px;color:#3b3b3b;left:-83.5px;width:200px;text-align:center;">3</div>
<div class="u" style="top:252px;font-size:13.5px;line-height:19px;color:#3b3b3b;left:-83.5px;width:200px;text-align:center;">4</div>
<div class="u" style="top:294px;font-size:13.5px;line-height:19px;color:#3b3b3b;left:-83.5px;width:200px;text-align:center;">6</div>
<div class="u" style="top:315px;font-size:13.5px;line-height:19px;color:#3b3b3b;left:-83.5px;width:200px;text-align:center;">7</div>
<div class="u" style="top:334px;font-size:13.5px;line-height:19px;color:#3b3b3b;left:-83.5px;width:200px;text-align:center;">8</div>
<div class="u" style="top:359px;font-size:13.5px;line-height:19px;color:#3b3b3b;left:-83.5px;width:200px;text-align:center;">9</div>
<div class="u" style="top:380px;font-size:13.5px;line-height:19px;color:#3b3b3b;left:-83.5px;width:200px;text-align:center;">10</div>
<div class="u" style="top:401px;font-size:13.5px;line-height:19px;color:#3b3b3b;left:-83.5px;width:200px;text-align:center;">11</div>
<div class="u" style="top:426px;font-size:13.5px;line-height:19px;color:#3b3b3b;left:-83.5px;width:200px;text-align:center;">12</div>
<div class="u" style="top:451px;font-size:13.5px;line-height:19px;color:#3b3b3b;left:-83.5px;width:200px;text-align:center;">13</div>
<div class="u" style="top:472px;font-size:13.5px;line-height:19px;color:#3b3b3b;left:-83.5px;width:200px;text-align:center;">14</div>
<div class="u" style="top:492px;font-size:13.5px;line-height:19px;color:#3b3b3b;left:-83.5px;width:200px;text-align:center;">15</div>
<div class="u" style="top:518px;font-size:13.5px;line-height:19px;color:#3b3b3b;left:-83.5px;width:200px;text-align:center;">16</div>
<div class="u" style="top:543px;font-size:13.5px;line-height:19px;color:#3b3b3b;left:-83.5px;width:200px;text-align:center;">17</div>
<div class="u" style="top:564px;font-size:13.5px;line-height:19px;color:#3b3b3b;left:-83.5px;width:200px;text-align:center;">18</div>
<div class="u" style="top:581px;font-size:13.5px;line-height:19px;color:#3b3b3b;left:-83.5px;width:200px;text-align:center;">19</div>
<div class="u" style="top:597px;font-size:13.5px;line-height:19px;color:#3b3b3b;left:-83.5px;width:200px;text-align:center;">20</div>
<div class="u" style="top:614px;font-size:13.5px;line-height:19px;color:#3b3b3b;left:-83.5px;width:200px;text-align:center;">21</div>
<div class="u" style="top:630px;font-size:13.5px;line-height:19px;color:#3b3b3b;left:-83.5px;width:200px;text-align:center;">22</div>
<div class="u" style="top:646px;font-size:13.5px;line-height:19px;color:#3b3b3b;left:-83.5px;width:200px;text-align:center;">23</div>
<div class="u" style="top:663px;font-size:13.5px;line-height:19px;color:#3b3b3b;left:-83.5px;width:200px;text-align:center;">24</div>
<div style="position:absolute;left:0px;top:265px;width:36px;height:26px;background:#e95420;"></div>
<div class="t" style="top:269px;font-size:13.9px;line-height:20px;color:#fff;font-weight:bold;left:-83.5px;width:200px;text-align:center;">5</div>
<div style="position:absolute;left:116px;top:226px;width:276px;height:1px;background:#333;"></div>
<div style="position:absolute;left:116px;top:227px;width:276px;height:1px;background:#a8a8a8;"></div>
<div style="position:absolute;left:116px;top:251px;width:276px;height:1px;background:#6a6a6a;"></div>
<div style="position:absolute;left:116px;top:252px;width:276px;height:1px;background:#6a6a6a;"></div>
<div style="position:absolute;left:116px;top:315px;width:276px;height:1px;background:#333;"></div>
<div style="position:absolute;left:116px;top:316px;width:276px;height:1px;background:#a8a8a8;"></div>
<div style="position:absolute;left:116px;top:330px;width:276px;height:1px;background:#333;"></div>
<div style="position:absolute;left:116px;top:331px;width:276px;height:1px;background:#a8a8a8;"></div>
<div style="position:absolute;left:116px;top:380px;width:276px;height:1px;background:#333;"></div>
<div style="position:absolute;left:116px;top:381px;width:276px;height:1px;background:#a8a8a8;"></div>
<div style="position:absolute;left:116px;top:396px;width:276px;height:1px;background:#6a6a6a;"></div>
<div style="position:absolute;left:116px;top:397px;width:276px;height:1px;background:#6a6a6a;"></div>
<div style="position:absolute;left:116px;top:447px;width:276px;height:1px;background:#333;"></div>
<div style="position:absolute;left:116px;top:448px;width:276px;height:1px;background:#a8a8a8;"></div>
<div style="position:absolute;left:116px;top:472px;width:276px;height:1px;background:#333;"></div>
<div style="position:absolute;left:116px;top:473px;width:276px;height:1px;background:#a8a8a8;"></div>
<div style="position:absolute;left:116px;top:488px;width:276px;height:1px;background:#6a6a6a;"></div>
<div style="position:absolute;left:116px;top:489px;width:276px;height:1px;background:#6a6a6a;"></div>
<div style="position:absolute;left:116px;top:539px;width:276px;height:1px;background:#333;"></div>
<div style="position:absolute;left:116px;top:540px;width:276px;height:1px;background:#a8a8a8;"></div>
<div style="position:absolute;left:116px;top:564px;width:276px;height:1px;background:#333;"></div>
<div style="position:absolute;left:116px;top:565px;width:276px;height:1px;background:#a8a8a8;"></div>
<div style="position:absolute;left:115px;top:265px;width:274px;height:22px;border:2px solid #e95420;"></div>
<div style="position:absolute;left:390px;top:288px;width:5px;height:5px;background:#e95420;"></div>
<div class="t" style="top:210px;font-size:12.5px;line-height:18px;color:#000;letter-spacing:0.445px;left:117.438px;">Som...</div>
<div class="t" style="top:228px;font-size:20.2px;line-height:26px;color:#000;letter-spacing:0.378px;right:633.309px;">8.252.272.417</div>
<div class="t" style="top:236px;font-size:12.5px;line-height:18px;color:#000;letter-spacing:0.084px;left:393.4px;">Persones al món al 2025</div>
<div class="t" style="top:267px;font-size:20.2px;line-height:26px;color:#000;right:633.845px;">15</div>
<div class="t" style="top:274px;font-size:12.5px;line-height:18px;color:#000;letter-spacing:-0.300px;left:393.4px;">Persones tenen el 15% de la riquesa</div>
<div class="t" style="top:273.5px;font-size:12.3px;line-height:18px;color:#000;right:243.562px;">Tenen:</div>
<div class="t" style="top:268px;font-size:18.7px;line-height:25px;color:#000;letter-spacing:0.118px;right:38.1585px;">2.354.000.000 USD</div>
<div class="t" style="top:292px;font-size:20.2px;line-height:26px;color:#000;letter-spacing:0.399px;right:632.867px;">0,0000002%</div>
<div class="t" style="top:300px;font-size:12.5px;line-height:18px;color:#000;letter-spacing:0.046px;left:393.4px;">De la població mundial</div>
<div class="t" style="top:332px;font-size:20.2px;line-height:26px;color:#000;letter-spacing:0.354px;right:633.487px;">3.028</div>
<div class="t" style="top:339px;font-size:12.5px;line-height:18px;color:#000;letter-spacing:0.019px;left:393.637px;">Són milmilionaris</div>
<div class="t" style="top:339px;font-size:12.5px;line-height:18px;color:#000;letter-spacing:-0.261px;left:491.85px;">(més de mil milions de dòlars de patrimoni)</div>
<div class="t" style="top:338.5px;font-size:12.3px;line-height:18px;color:#000;right:243.562px;">Tenen:</div>
<div class="t" style="top:333px;font-size:18.7px;line-height:25px;color:#000;letter-spacing:0.158px;right:38.1903px;">16.100.000.000 USD</div>
<div class="t" style="top:357px;font-size:20.2px;line-height:26px;color:#000;letter-spacing:0.431px;right:632.883px;">0,00004%</div>
<div class="t" style="top:365px;font-size:12.5px;line-height:18px;color:#000;letter-spacing:0.046px;left:393.4px;">De la població mundial</div>
<div class="t" style="top:399px;font-size:20.2px;line-height:26px;color:#000;right:633.287px;">1%</div>
<div class="t" style="top:406px;font-size:12.5px;line-height:18px;color:#000;letter-spacing:0.125px;left:392.8px;">o menys, té el 48% de la riquesa</div>
<div class="t" style="top:424px;font-size:20.2px;line-height:26px;color:#000;letter-spacing:0.346px;right:633.447px;">60.000.000</div>
<div class="t" style="top:431px;font-size:12.5px;line-height:18px;color:#000;letter-spacing:0.065px;left:392.688px;">persones són milionaris</div>
<div class="t" style="top:433px;font-size:10.4px;line-height:15px;color:#000;letter-spacing:0.075px;left:528.376px;">(més d'1 milió de dòlars)</div>
<div class="t" style="top:431px;font-size:12.5px;line-height:18px;color:#c08f1c;right:296.823px;">1</div>
<div class="t" style="top:431px;font-size:12.5px;line-height:18px;color:#c08f1c;letter-spacing:0.139px;left:730px;">de cada...</div>
<div class="t" style="top:449px;font-size:20.2px;line-height:26px;color:#808080;letter-spacing:0.378px;right:633.309px;">8.192.272.417</div>
<div class="t" style="top:456px;font-size:12.5px;line-height:18px;color:#808080;letter-spacing:0.147px;left:393.325px;">som la resta</div>
<div class="t" style="top:456px;font-size:12.5px;line-height:18px;color:#c08f1c;right:296.519px;">100</div>
<div class="t" style="top:456px;font-size:12.5px;line-height:18px;color:#c08f1c;letter-spacing:0.077px;left:729.688px;">persones al món, tenen més d'1 milió de dòlars</div>
<div class="t" style="top:491px;font-size:20.2px;line-height:26px;color:#808080;letter-spacing:0.361px;right:633.429px;">3.740.000.000</div>
<div class="t" style="top:498px;font-size:12.5px;line-height:18px;color:#808080;letter-spacing:0.064px;left:393.637px;">Són pobres (menys de 8,3$ al dia)</div>
<div class="t" style="top:498px;font-size:12.5px;line-height:18px;color:#ff8568;right:296.485px;">5</div>
<div class="t" style="top:498px;font-size:12.5px;line-height:18px;color:#ff8568;letter-spacing:0.139px;left:730px;">de cada...</div>
<div class="t" style="top:516px;font-size:20.2px;line-height:26px;color:#808080;letter-spacing:0.290px;right:633.479px;">700.000.000</div>
<div class="t" style="top:523px;font-size:12.5px;line-height:18px;color:#808080;letter-spacing:0.213px;left:393.4px;">Passen fam</div>
<div class="t" style="top:523px;font-size:12.5px;line-height:18px;color:#ff8568;right:296.533px;">10</div>
<div class="t" style="top:523px;font-size:12.5px;line-height:18px;color:#ff8568;letter-spacing:0.041px;left:729.688px;">persones al món, són pobres</div>
<div class="t" style="top:541px;font-size:20.2px;line-height:26px;color:#808080;letter-spacing:0.336px;right:633.351px;">4.452.272.417</div>
<div class="t" style="top:548px;font-size:12.5px;line-height:18px;color:#808080;letter-spacing:0.050px;left:393.4px;">No som pobres ni milionaris</div>
<div class="t" style="top:548px;font-size:12.5px;line-height:18px;color:#8d281e;right:296.823px;">1</div>
<div class="t" style="top:548px;font-size:12.5px;line-height:18px;color:#8d281e;letter-spacing:0.139px;left:730px;">de cada...</div>
<div class="t" style="top:565px;font-size:12.5px;line-height:18px;color:#8d281e;right:296.533px;">10</div>
<div class="t" style="top:565px;font-size:12.5px;line-height:18px;color:#8d281e;letter-spacing:0.120px;left:729.688px;">persones al món, passen fam</div>
<div class="t" style="top:597px;font-size:12.5px;line-height:18px;color:#000;letter-spacing:-0.047px;left:393px;">Dades</div>
<div class="t" style="top:614px;font-size:12.5px;line-height:18px;color:#000;letter-spacing:-0.087px;left:496px;">Forbes</div>
<div class="t" style="top:630px;font-size:12.5px;line-height:18px;color:#000;letter-spacing:0.078px;left:495.938px;">Oxfamintermón</div>
<div class="t" style="top:646px;font-size:12.5px;line-height:18px;color:#000;letter-spacing:-0.094px;left:496.062px;">UBS</div>
<svg style="position:absolute;left:0;top:0;overflow:visible" width="1" height="1"><path d="M420.0 354.00L420.5 354.52L421.0 354.96L421.5 355.23L422.0 355.30L422.5 355.14L423.0 354.80L423.5 354.32L424.0 353.79L424.5 353.29L425.0 352.91L425.5 352.72L426.0 352.74L426.5 352.97L427.0 353.38L427.5 353.89L428.0 354.42L428.5 354.88L429.0 355.19L429.5 355.30L430.0 355.19L430.5 354.88L431.0 354.42L431.5 353.89L432.0 353.38L432.5 352.97L433.0 352.74L433.5 352.72L434.0 352.91L434.5 353.29L435.0 353.79L435.5 354.32L436.0 354.80L436.5 355.14L437.0 355.30L437.5 355.23L438.0 354.96L438.5 354.52L439.0 354.00L439.5 353.48L440.0 353.04L440.5 352.77L441.0 352.70L441.5 352.86L442.0 353.20L442.5 353.68L443.0 354.21L443.5 354.71L444.0 355.09L444.5 355.28L445.0 355.26L445.5 355.03L446.0 354.62L446.5 354.11L447.0 353.58L447.5 353.12L448.0 352.81L448.5 352.70L449.0 352.81L449.5 353.12L450.0 353.58L450.5 354.11L451.0 354.62L451.5 355.03L452.0 355.26L452.5 355.28L453.0 355.09L453.5 354.71L454.0 354.21L454.5 353.68L455.0 353.20L455.5 352.86L456.0 352.70L456.5 352.77L457.0 353.04L457.5 353.48L458.0 354.00L458.5 354.52L459.0 354.96L459.5 355.23L460.0 355.30L460.5 355.14L461.0 354.80L461.5 354.32L462.0 353.79L462.5 353.29L463.0 352.91L463.5 352.72L464.0 352.74L464.5 352.97L465.0 353.38L465.5 353.89L466.0 354.42L466.5 354.88L467.0 355.19L467.5 355.30L468.0 355.19L468.5 354.88L469.0 354.42L469.5 353.89L470.0 353.38L470.5 352.97L471.0 352.74L471.5 352.72L472.0 352.91L472.5 353.29L473.0 353.79L473.5 354.32L474.0 354.80L474.5 355.14L475.0 355.30L475.5 355.23L476.0 354.96L476.5 354.52L477.0 354.00L477.5 353.48L478.0 353.04L478.5 352.77L479.0 352.70L479.5 352.86L480.0 353.20L480.5 353.68L481.0 354.21L481.5 354.71L482.0 355.09L482.5 355.28L483.0 355.26L483.5 355.03L484.0 354.62L484.5 354.11L485.0 353.58L485.5 353.12L486.0 352.81L486.5 352.70L487.0 352.81L487.5 353.12L488.0 353.58L488.5 354.11L489.0 354.62L489.5 355.03L490.0 355.26" fill="none" stroke="#f0202c" stroke-width="1.15" stroke-linejoin="round"/></svg>
<svg style="position:absolute;left:0;top:0;overflow:visible" width="1" height="1"><path d="M496.0 645.00L496.5 645.52L497.0 645.96L497.5 646.23L498.0 646.30L498.5 646.14L499.0 645.80L499.5 645.32L500.0 644.79L500.5 644.29L501.0 643.91L501.5 643.72L502.0 643.74L502.5 643.97L503.0 644.38L503.5 644.89L504.0 645.42L504.5 645.88L505.0 646.19L505.5 646.30L506.0 646.19L506.5 645.88L507.0 645.42L507.5 644.89L508.0 644.38L508.5 643.97L509.0 643.74L509.5 643.72L510.0 643.91L510.5 644.29L511.0 644.79L511.5 645.32L512.0 645.80L512.5 646.14L513.0 646.30L513.5 646.23L514.0 645.96L514.5 645.52L515.0 645.00L515.5 644.48L516.0 644.04L516.5 643.77L517.0 643.70L517.5 643.86L518.0 644.20L518.5 644.68L519.0 645.21L519.5 645.71L520.0 646.09L520.5 646.28L521.0 646.26L521.5 646.03L522.0 645.62L522.5 645.11L523.0 644.58L523.5 644.12L524.0 643.81L524.5 643.70L525.0 643.81L525.5 644.12L526.0 644.58L526.5 645.11L527.0 645.62L527.5 646.03L528.0 646.26L528.5 646.28L529.0 646.09L529.5 645.71L530.0 645.21L530.5 644.68L531.0 644.20L531.5 643.86L532.0 643.70L532.5 643.77L533.0 644.04L533.5 644.48L534.0 645.00L534.5 645.52L535.0 645.96L535.5 646.23L536.0 646.30L536.5 646.14L537.0 645.80L537.5 645.32L538.0 644.79L538.5 644.29L539.0 643.91L539.5 643.72L540.0 643.74L540.5 643.97L541.0 644.38L541.5 644.89L542.0 645.42L542.5 645.88L543.0 646.19L543.5 646.30L544.0 646.19L544.5 645.88L545.0 645.42L545.5 644.89L546.0 644.38L546.5 643.97L547.0 643.74L547.5 643.72L548.0 643.91L548.5 644.29L549.0 644.79L549.5 645.32L550.0 645.80L550.5 646.14L551.0 646.30L551.5 646.23L552.0 645.96L552.5 645.52L553.0 645.00L553.5 644.48L554.0 644.04L554.5 643.77L555.0 643.70L555.5 643.86L556.0 644.20L556.5 644.68L557.0 645.21L557.5 645.71L558.0 646.09L558.5 646.28L559.0 646.26L559.5 646.03L560.0 645.62L560.5 645.11L561.0 644.58L561.5 644.12L562.0 643.81L562.5 643.70L563.0 643.81L563.5 644.12L564.0 644.58L564.5 645.11L565.0 645.62L565.5 646.03L566.0 646.26L566.5 646.28L567.0 646.09L567.5 645.71L568.0 645.21L568.5 644.68L569.0 644.20L569.5 643.86L570.0 643.70L570.5 643.77L571.0 644.04L571.5 644.48L572.0 645.00L572.5 645.52L573.0 645.96L573.5 646.23L574.0 646.30L574.5 646.14L575.0 645.80L575.5 645.32L576.0 644.79L576.5 644.29L577.0 643.91L577.5 643.72L578.0 643.74L578.5 643.97L579.0 644.38L579.5 644.89L580.0 645.42L580.5 645.88L581.0 646.19L581.5 646.30L582.0 646.19" fill="none" stroke="#f0202c" stroke-width="1.15" stroke-linejoin="round"/></svg>
<svg style="position:absolute;left:0;top:0;overflow:visible" width="1" height="1"><path d="M496.0 661.50L496.5 662.02L497.0 662.46L497.5 662.73L498.0 662.80L498.5 662.64L499.0 662.30L499.5 661.82L500.0 661.29L500.5 660.79L501.0 660.41L501.5 660.22L502.0 660.24L502.5 660.47L503.0 660.88L503.5 661.39L504.0 661.92L504.5 662.38L505.0 662.69L505.5 662.80L506.0 662.69L506.5 662.38L507.0 661.92L507.5 661.39L508.0 660.88L508.5 660.47L509.0 660.24L509.5 660.22L510.0 660.41L510.5 660.79L511.0 661.29L511.5 661.82L512.0 662.30L512.5 662.64L513.0 662.80L513.5 662.73L514.0 662.46L514.5 662.02L515.0 661.50L515.5 660.98L516.0 660.54L516.5 660.27L517.0 660.20L517.5 660.36L518.0 660.70L518.5 661.18L519.0 661.71L519.5 662.21L520.0 662.59L520.5 662.78L521.0 662.76L521.5 662.53L522.0 662.12L522.5 661.61L523.0 661.08" fill="none" stroke="#f0202c" stroke-width="1.15" stroke-linejoin="round"/></svg>
<svg style="position:absolute;left:0;top:0;overflow:visible" width="1" height="1"><path d="M893.3 470.6L896.2 472.4L900.4 469.1" fill="none" stroke="#f0202c" stroke-width="1.15" stroke-linejoin="round"/><path d="M556.2 444.7L558.6 446.7L562 443.7" fill="none" stroke="#f0202c" stroke-width="1.15" stroke-linejoin="round"/></svg>
</body></html>
